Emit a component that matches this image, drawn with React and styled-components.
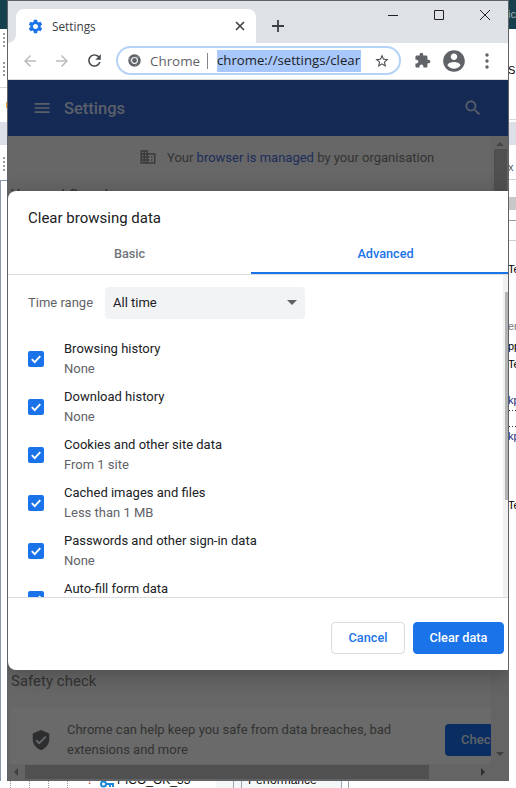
import React from 'react';
import styled, { createGlobalStyle } from 'styled-components';

const Global = createGlobalStyle`
  html, body { margin: 0; padding: 0; background: #fff; overflow: hidden; }
  * { box-sizing: border-box; }
`;

const P = {
  gear: 'M19.14 12.94c.04-.3.06-.61.06-.94 0-.32-.02-.64-.07-.94l2.03-1.58c.18-.14.23-.41.12-.61l-1.92-3.32c-.12-.22-.37-.29-.59-.22l-2.39.96c-.5-.38-1.03-.7-1.62-.94l-.36-2.54c-.04-.24-.24-.41-.48-.41h-3.84c-.24 0-.43.17-.47.41l-.36 2.54c-.59.24-1.13.57-1.62.94l-2.39-.96c-.22-.08-.47 0-.59.22L2.74 8.87c-.12.21-.08.47.12.61l2.03 1.58c-.05.3-.09.63-.09.94s.02.64.07.94l-2.03 1.58c-.18.14-.23.41-.12.61l1.92 3.32c.12.22.37.29.59.22l2.39-.96c.5.38 1.03.7 1.62.94l.36 2.54c.05.24.24.41.48.41h3.84c.24 0 .44-.17.47-.41l.36-2.54c.59-.24 1.13-.56 1.62-.94l2.39.96c.22.08.47 0 .59-.22l1.92-3.32c.12-.22.07-.47-.12-.61l-2.01-1.58zM12 15.6c-1.98 0-3.6-1.62-3.6-3.6s1.62-3.6 3.6-3.6 3.6 1.62 3.6 3.6-1.62 3.6-3.6 3.6z',
  back: 'M20 11H7.83l5.59-5.59L12 4l-8 8 8 8 1.41-1.41L7.83 13H20v-2z',
  forward: 'M12 4l-1.41 1.41L16.17 11H4v2h12.17l-5.58 5.59L12 20l8-8z',
  reload: 'M17.65 6.35C16.2 4.9 14.21 4 12 4c-4.42 0-7.99 3.58-7.99 8s3.57 8 7.99 8c3.73 0 6.84-2.55 7.73-6h-2.08c-.82 2.33-3.04 4-5.65 4-3.31 0-6-2.69-6-6s2.69-6 6-6c1.66 0 3.14.69 4.22 1.78L13 11h7V4l-2.35 2.35z',
  star: 'M22 9.24l-7.19-.62L12 2 9.19 8.63 2 9.24l5.46 4.73L5.82 21 12 17.27 18.18 21l-1.63-7.03L22 9.24zM12 15.4l-3.76 2.27 1-4.28-3.32-2.88 4.38-.38L12 6.1l1.71 4.04 4.38.38-3.32 2.88 1 4.28L12 15.4z',
  puzzle: 'M20.5 11H19V7c0-1.1-.9-2-2-2h-4V3.5C13 2.12 11.88 1 10.5 1S8 2.12 8 3.5V5H4c-1.1 0-1.99.9-1.99 2v3.8H3.5c1.49 0 2.7 1.21 2.7 2.7s-1.21 2.7-2.7 2.7H2V20c0 1.1.9 2 2 2h3.8v-1.5c0-1.49 1.21-2.7 2.7-2.7 1.49 0 2.7 1.21 2.7 2.7V22H17c1.1 0 2-.9 2-2v-4h1.5c1.38 0 2.5-1.12 2.5-2.5S21.88 11 20.5 11z',
  avatar: 'M12 2C6.48 2 2 6.48 2 12s4.48 10 10 10 10-4.48 10-10S17.52 2 12 2zm0 3c1.66 0 3 1.34 3 3s-1.34 3-3 3-3-1.34-3-3 1.34-3 3-3zm0 14.2c-2.5 0-4.71-1.28-6-3.22.03-1.99 4-3.08 6-3.08 1.99 0 5.97 1.09 6 3.08-1.29 1.94-3.5 3.22-6 3.22z',
  menu: 'M3 18h18v-2H3v2zm0-5h18v-2H3v2zm0-7v2h18V6H3z',
  search: 'M15.5 14h-.79l-.28-.27C15.41 12.59 16 11.11 16 9.5 16 5.91 13.09 3 9.5 3S3 5.91 3 9.5 5.91 16 9.5 16c1.61 0 3.09-.59 4.23-1.57l.27.28v.79l5 4.99L20.49 19l-4.99-5zm-6 0C7.01 14 5 11.99 5 9.5S7.01 5 9.5 5 14 7.01 14 9.5 11.99 14 9.5 14z',
  domain: 'M12 7V3H2v18h20V7H12zM6 19H4v-2h2v2zm0-4H4v-2h2v2zm0-4H4V9h2v2zm0-4H4V5h2v2zm4 12H8v-2h2v2zm0-4H8v-2h2v2zm0-4H8V9h2v2zm0-4H8V5h2v2zm10 12h-8v-2h2v-2h-2v-2h2v-2h-2V9h8v10zm-2-8h-2v2h2v-2zm0 4h-2v2h2v-2z',
  shield: 'M12 1L3 5v6c0 5.55 3.84 10.74 9 12 5.16-1.26 9-6.45 9-12V5l-9-4zm-2 16l-4-4 1.41-1.41L10 14.17l6.59-6.59L18 9l-8 8z',
};

const Glyph = ({ d, size = 24, color = '#5f6368' }) => (
  <svg width={size} height={size} viewBox="0 0 24 24" style={{ display: 'block', flex: 'none' }}>
    <path d={d} fill={color} />
  </svg>
);

const Line = ({ d, w = 10, color = '#202124', sw = 1 }) => (
  <svg width={w} height={w} viewBox={`0 0 ${w} ${w}`} style={{ display: 'block', flex: 'none' }}>
    <path d={d} fill="none" stroke={color} strokeWidth={sw} />
  </svg>
);

const ChromeMark = () => (
  <svg width="13" height="13" viewBox="0 0 24 24" style={{ display: 'block', flex: 'none' }}>
    <circle cx="12" cy="12" r="11.5" fill="#5f6368" />
    <circle cx="12" cy="12" r="6.4" fill="#fff" />
    <circle cx="12" cy="12" r="4.4" fill="#5f6368" />
    <path d="M12 5.6h10M6.5 15.2L1.6 6.6M17.5 15.2l-5 8.6" stroke="#9aa0a6" strokeWidth="1.4" />
  </svg>
);

const Desktop = styled.div`
  width: 516px;
  height: 788px;
  display: grid;
  grid-template-columns: 7px 502px 7px;
  grid-template-rows: 781px 7px;
  overflow: hidden;
  background: #fff;
  font-family: Roboto, "Liberation Sans", sans-serif;
`;

const Strip = styled.div`
  display: flex;
  flex-direction: column;
  overflow: hidden;
  background: #fff;
`;

const Band = styled.div`
  height: ${p => p.$h}px;
  flex: none;
  background: ${p => p.$bg || 'transparent'};
  border-bottom: ${p => (p.$line ? `1px solid ${p.$line}` : '0')};
  color: ${p => p.$color || '#000'};
  font: 11px/${p => p.$h}px "Liberation Sans", sans-serif;
  text-indent: -1px;
  white-space: nowrap;
  overflow: hidden;
`;

const Grip = styled.div`
  height: ${p => p.$h}px;
  flex: none;
  margin-left: 3px;
  width: 2px;
  margin-top: ${p => p.$top}px;
  background: repeating-linear-gradient(#9a9a9a 0 2px, transparent 2px 4px);
`;

const Orange = styled.div`
  height: 6px;
  width: 1px;
  margin: 14px 0 0 6px;
  background: #f2a33c;
`;

const Blob = styled.div`
  height: 13px;
  width: 7px;
  margin-top: 17px;
  background: #c8c8c8;
`;

const Rail = styled.div`
  flex: 1;
  border-left: 1px solid #8b99ad;
`;

const Dots = styled.div`
  height: 1px;
  flex: none;
  margin-top: ${p => p.$top}px;
  background: repeating-linear-gradient(90deg, #333 0 1px, transparent 1px 3px);
`;

const Footer = styled.div`
  grid-column: 1 / 4;
  overflow: hidden;
  display: grid;
  grid-template-columns: 10px 19px 19px 19px 21px 12px 17px 99px 17px 1px 7px 1px 99px 1px 6px 1fr;
  background: #fff;
`;

const Cell = styled.div`
  border-left: ${p => (p.$dot ? '1px dotted #999' : p.$solid ? '1px solid #9aa5b5' : '0')};
  background: ${p => p.$bg || 'transparent'};
  color: ${p => p.$color || '#000'};
  font: ${p => p.$weight || 400} 12px/1 Roboto, sans-serif;
  white-space: nowrap;
  overflow: hidden;
`;

const ClipText = styled.div`
  margin-top: -7px;
  font: 12px/12px "Liberation Sans", sans-serif;
  color: ${p => p.$color || '#111'};
  padding-left: ${p => p.$pl || 0}px;
`;

const Window = styled.div`
  display: flex;
  flex-direction: column;
  border: 1px solid #5f6266;
  background: #fff;
  overflow: hidden;
  width: 502px;
`;

const TabStrip = styled.div`
  height: 42px;
  flex: none;
  background: #dee1e6;
  display: flex;
  align-items: flex-end;
  padding-left: 8px;
`;

const Tab = styled.div`
  position: relative;
  width: 240px;
  height: 34px;
  background: #fff;
  border-radius: 8px 8px 0 0;
  display: flex;
  align-items: center;
  padding: 0 11px;
  gap: 8px;
  font: 11.8px "Open Sans", sans-serif;
  color: #3c4043;
  &::before {
    content: '';
    position: absolute;
    left: -8px;
    bottom: 0;
    width: 8px;
    height: 8px;
    background: radial-gradient(circle at 0 0, transparent 7.5px, #fff 8px);
  }
`;

const TabTitle = styled.span`
  flex: 1;
`;

const NewTab = styled.div`
  margin-left: 16px;
  height: 34px;
  display: flex;
  align-items: center;
`;

const WinControls = styled.div`
  margin-left: auto;
  align-self: flex-start;
  height: 30px;
  display: flex;
  align-items: center;
  padding-right: 18px;
  gap: 36px;
  margin-top: -1px;
`;

const Toolbar = styled.div`
  height: 37px;
  flex: none;
  background: #fff;
  border-bottom: 1px solid #dadce0;
  display: flex;
  align-items: center;
  padding-bottom: 1px;
`;

const NavButton = styled.div`
  width: ${p => p.$w}px;
  flex: none;
  display: flex;
  justify-content: center;
`;

const Omnibox = styled.div`
  width: 285px;
  height: 29px;
  flex: none;
  border: 2px solid #b5d2f7;
  border-radius: 15px;
  background: #fff;
  display: flex;
  align-items: center;
  padding-left: 10px;
  font: 14px "Open Sans", sans-serif;
  color: #5f6368;
  overflow: hidden;
`;

const Scheme = styled.span`
  margin-left: 9px;
  font-size: 13.4px;
  width: 57px;
  flex: none;
`;

const Sep = styled.span`
  width: 1px;
  height: 16px;
  background: #80868b;
  flex: none;
`;

const Selected = styled.span`
  margin-left: 9px;
  background: #a8c7fa;
  color: #202124;
  width: 144px;
  flex: none;
  height: 22px;
  line-height: 21px;
  font-size: 13.2px;
  white-space: nowrap;
  overflow: hidden;
`;

const Star = styled.div`
  margin-left: 13px;
`;

const Stage = styled.div`
  position: relative;
  flex: 1;
  min-height: 0;
  display: flex;
  flex-direction: column;
  overflow: hidden;
  background: #666766;
`;

const Header = styled.div`
  height: 56px;
  flex: none;
  background: #152955;
  display: flex;
  align-items: center;
  padding: 0 25px 0 24px;
  color: #5a6069;
  font: 500 16.5px Roboto, sans-serif;
  gap: 12px;
`;

const HeaderTitle = styled.span`
  flex: 1;
`;

const Viewport = styled.div`
  flex: 1;
  min-height: 0;
  display: flex;
`;

const PageBody = styled.div`
  width: 483px;
  flex: none;
  overflow: hidden;
  padding-left: 3px;
  color: #333;
`;

const Managed = styled.div`
  height: 42px;
  display: flex;
  align-items: center;
  padding-left: 128px;
  gap: 10px;
  font: 13px Roboto, sans-serif;
  color: #333;
  margin-bottom: 6px;
`;

const ManagedLink = styled.span`
  color: #1c2c5c;
`;

const SectionTitle = styled.div`
  font: 400 14.8px/22px Roboto, sans-serif;
  color: #333;
  letter-spacing: 0.1px;
  height: ${p => p.$h}px;
  white-space: nowrap;
`;

const SafetyCard = styled.div`
  height: 60px;
  width: 500px;
  background: #696a69;
  border-radius: 4px 4px 0 0;
  display: flex;
  align-items: flex-start;
  padding: 12px 0 0 19px;
  gap: 15px;
`;

const ShieldWrap = styled.div`
  margin-top: 9px;
  flex: none;
`;

const CardText = styled.div`
  width: 350px;
  flex: none;
  font: 13px/20px Roboto, sans-serif;
  color: #333;
`;

const CheckBtn = styled.div`
  width: 80px;
  height: 32px;
  margin: 4px 0 0 13px;
  flex: none;
  border-radius: 4px;
  background: #0b2e62;
  color: #5f6368;
  font: 500 13px/32px Roboto, sans-serif;
  padding-left: 16px;
`;

const VBar = styled.div`
  width: 17px;
  flex: none;
  background: #636463;
  display: flex;
  flex-direction: column;
  align-items: center;
  padding-left: 1px;
`;

const VThumb = styled.div`
  width: 13px;
  height: 160px;
  flex: none;
  margin-top: 3px;
  background: #4f504f;
`;

const ArrowUp = styled.div`
  margin-top: 6px;
  width: 0;
  height: 0;
  flex: none;
  border: 4px solid transparent;
  border-top: 0;
  border-bottom: 4px solid #454545;
`;

const ArrowDown = styled.div`
  margin-top: auto;
  margin-bottom: 8px;
  width: 0;
  height: 0;
  border: 4px solid transparent;
  border-bottom: 0;
  border-top: 4px solid #3f3f3f;
`;

const HBar = styled.div`
  height: 16px;
  flex: none;
  background: #636463;
  display: flex;
  align-items: center;
`;

const ArrowLeft = styled.div`
  margin-left: 6px;
  width: 0;
  height: 0;
  flex: none;
  border: 4px solid transparent;
  border-left: 0;
  border-right: 4px solid #3f3f3f;
`;

const HThumb = styled.div`
  margin-left: 7px;
  width: 404px;
  height: 14px;
  flex: none;
  background: #4f504f;
`;

const ArrowRight = styled.div`
  margin-left: 52px;
  width: 0;
  height: 0;
  flex: none;
  border: 4px solid transparent;
  border-right: 0;
  border-left: 4px solid #2f2f2f;
`;

const Dialog = styled.div`
  position: absolute;
  left: 0;
  top: 111px;
  width: 500px;
  height: 479px;
  background: #fff;
  border-radius: 8px 0 0 8px;
  box-shadow: 0 4px 22px rgba(0, 0, 0, 0.28);
  display: flex;
  flex-direction: column;
`;

const DialogTitle = styled.div`
  height: 50px;
  flex: none;
  padding: 17px 0 0 20px;
  font: 400 15px/20px Roboto, sans-serif;
  color: #202124;
`;

const Tabs = styled.div`
  height: 34px;
  flex: none;
  display: grid;
  grid-template-columns: 243px 257px;
  border-bottom: 1px solid #dadce0;
`;

const TabBtn = styled.div`
  text-align: center;
  font: 500 12.7px/26px Roboto, sans-serif;
  color: ${p => (p.$on ? '#1a73e8' : '#70757a')};
  border-bottom: ${p => (p.$on ? '2px solid #1a73e8' : '0')};
  padding-left: ${p => (p.$on ? 12 : 0)}px;
  height: ${p => (p.$on ? 33 : 32)}px;
`;

const ScrollArea = styled.div`
  flex: 1;
  min-height: 0;
  display: flex;
  overflow: hidden;
  border-bottom: 1px solid #dadce0;
`;

const List = styled.div`
  flex: 1;
  padding: 12px 0 0 20px;
`;

const TimeRow = styled.div`
  display: flex;
  align-items: center;
  height: 32px;
  margin-bottom: 16px;
  font: 13px Roboto, sans-serif;
  color: #5f6368;
`;

const TimeLabel = styled.span`
  width: 77px;
  flex: none;
  margin-top: -2px;
`;

const Select = styled.div`
  width: 200px;
  height: 32px;
  border-radius: 4px;
  background: #f1f3f4;
  color: #202124;
  display: flex;
  align-items: center;
  justify-content: space-between;
  padding: 0 8px 2px 8px;
`;

const Caret = styled.span`
  width: 0;
  height: 0;
  border-left: 5.5px solid transparent;
  border-right: 5.5px solid transparent;
  border-top: 5.5px solid #5f6368;
`;

const Row = styled.div`
  height: 48px;
  flex: none;
  display: flex;
  align-items: center;
  gap: 20px;
`;

const Box = styled.div`
  width: 16px;
  height: 16px;
  border-radius: 2px;
  background: #1a73e8;
  flex: none;
  display: flex;
  align-items: center;
  justify-content: center;
`;

const RowText = styled.div`
  font: 13px/20px Roboto, sans-serif;
  color: #202124;
`;

const RowSub = styled.div`
  color: #5f6368;
`;

const Track = styled.div`
  width: 5px;
  flex: none;
  background: #f1f1f1;
  padding: 17px 0 0 2px;
`;

const Thumb = styled.div`
  width: 3px;
  height: 208px;
  background: #b4b4b4;
`;

const Actions = styled.div`
  height: 72px;
  flex: none;
  display: flex;
  justify-content: flex-end;
  align-items: flex-start;
  gap: 8px;
  padding: 24px 4px 0 0;
`;

const Button = styled.div`
  height: 32px;
  width: ${p => p.$w}px;
  border-radius: 4px;
  text-align: center;
  font: 500 12.7px/30px Roboto, sans-serif;
  border: 1px solid ${p => (p.$primary ? '#1a73e8' : '#dadce0')};
  background: ${p => (p.$primary ? '#1a73e8' : '#fff')};
  color: ${p => (p.$primary ? '#fff' : '#1a73e8')};
`;

const rows = [
  ['Browsing history', 'None'],
  ['Download history', 'None'],
  ['Cookies and other site data', 'From 1 site'],
  ['Cached images and files', 'Less than 1 MB'],
  ['Passwords and other sign-in data', 'None'],
  ['Auto-fill form data', 'None'],
];

export default function App() {
  return (
    <Desktop>
      <Global />
      <Strip>
        <Band $h={29} $bg="#17404f" />
        <Grip $top={4} $h={14} />
        <Grip $top={15} $h={15} />
        <Band $h={11} $line="#d8d8d8" />
        <Band $h={34}><Orange /></Band>
        <Band $h={23} $bg="#dcdfe8" />
        <Grip $top={12} $h={15} />
        <Band $h={9} $line="#8b99ad" />
        <Rail />
      </Strip>

      <Window>
        <TabStrip>
          <Tab>
            <Glyph d={P.gear} size={17} color="#1a73e8" />
            <TabTitle>Settings</TabTitle>
            <Line d="M1 1l8 8M9 1l-8 8" color="#3c4043" sw={1.6} />
          </Tab>
          <NewTab>
            <Line w={12} d="M6 0v12M0 6h12" color="#3c4043" sw={1.8} />
          </NewTab>
          <WinControls>
            <Line d="M0 5.5h10" />
            <Line d="M.5.5h9v9h-9z" />
            <Line d="M0 0l10 10M10 0L0 10" />
          </WinControls>
        </TabStrip>

        <Toolbar>
          <NavButton $w={44}><Glyph d={P.back} size={18} color="#babcbe" /></NavButton>
          <NavButton $w={20}><Glyph d={P.forward} size={18} color="#babcbe" /></NavButton>
          <NavButton $w={44}><Glyph d={P.reload} size={19} color="#4a4d51" /></NavButton>
          <Omnibox>
            <ChromeMark />
            <Scheme>Chrome</Scheme>
            <Sep />
            <Selected>chrome://settings/clear</Selected>
            <Star><Glyph d={P.star} size={16} color="#4a4d51" /></Star>
          </Omnibox>
          <NavButton $w={42}><Glyph d={P.puzzle} size={17} color="#5f6368" /></NavButton>
          <NavButton $w={22}><Glyph d={P.avatar} size={26} color="#5f6368" /></NavButton>
          <NavButton $w={44}>
            <svg width="4" height="16" viewBox="0 0 4 16" style={{ display: 'block' }}>
              <circle cx="2" cy="2" r="1.7" fill="#5f6368" />
              <circle cx="2" cy="8" r="1.7" fill="#5f6368" />
              <circle cx="2" cy="14" r="1.7" fill="#5f6368" />
            </svg>
          </NavButton>
        </Toolbar>

        <Stage>
          <Header>
            <Glyph d={P.menu} size={20} color="#5a6069" />
            <HeaderTitle>Settings</HeaderTitle>
            <Glyph d={P.search} size={20} color="#5a6069" />
          </Header>
          <Viewport>
            <PageBody>
              <Managed>
                <Glyph d={P.domain} size={18} color="#3a3a3a" />
                <span>Your <ManagedLink>browser is managed</ManagedLink> by your organisation</span>
              </Managed>
              <SectionTitle $h={486}>You and Google</SectionTitle>
              <SectionTitle $h={38}>Safety check</SectionTitle>
              <SafetyCard>
                <ShieldWrap><Glyph d={P.shield} size={22} color="#2d2e2f" /></ShieldWrap>
                <CardText>
                  Chrome can help keep you safe from data breaches, bad extensions and more
                </CardText>
                <CheckBtn>Check now</CheckBtn>
              </SafetyCard>
            </PageBody>
            <VBar>
              <ArrowUp />
              <VThumb />
              <ArrowDown />
            </VBar>
          </Viewport>
          <HBar>
            <ArrowLeft />
            <HThumb />
            <ArrowRight />
          </HBar>

          <Dialog>
            <DialogTitle>Clear browsing data</DialogTitle>
            <Tabs>
              <TabBtn>Basic</TabBtn>
              <TabBtn $on>Advanced</TabBtn>
            </Tabs>
            <ScrollArea>
              <List>
                <TimeRow>
                  <TimeLabel>Time range</TimeLabel>
                  <Select>All time<Caret /></Select>
                </TimeRow>
                {rows.map(([title, sub]) => (
                  <Row key={title}>
                    <Box>
                      <svg width="12" height="12" viewBox="0 0 12 12" style={{ display: 'block' }}>
                        <path d="M1.8 6.2l2.9 2.9 5.6-6" fill="none" stroke="#fff" strokeWidth="1.9" />
                      </svg>
                    </Box>
                    <RowText>
                      {title}
                      <RowSub>{sub}</RowSub>
                    </RowText>
                  </Row>
                ))}
              </List>
              <Track><Thumb /></Track>
            </ScrollArea>
            <Actions>
              <Button $w={74}>Cancel</Button>
              <Button $w={91} $primary>Clear data</Button>
            </Actions>
          </Dialog>
        </Stage>
      </Window>

      <Strip>
        <Band $h={29} $bg="#17404f" $color="#9fb4bd">ic</Band>
        <Band $h={32} />
        <Band $h={18}>S</Band>
        <Band $h={41} $line="#d8d8d8" />
        <Band $h={2} />
        <Band $h={23} $bg="#dcdfe8" />
        <Band $h={13} />
        <Band $h={18} $color="#555">x</Band>
        <Band $h={4} $line="#d0d0d0" />
        <Band $h={41} $line="#9a9a9a"><Blob /></Band>
        <Band $h={20} $line="#cfcfcf" />
        <Band $h={19} />
        <Band $h={18}>Te</Band>
        <Band $h={39} />
        <Band $h={18} $color="#777">er</Band>
        <Band $h={2} />
        <Band $h={18}>pp</Band>
        <Band $h={18}>Te</Band>
        <Band $h={18} />
        <Band $h={18} $color="#1a2a7a">kp</Band>
        <Dots $top={1} />
        <Dots $top={15} />
        <Band $h={18} $color="#1a2a7a">kp</Band>
        <Band $h={51} />
        <Band $h={18}>Te</Band>
      </Strip>

      <Footer>
        <Cell />
        <Cell $dot />
        <Cell $dot />
        <Cell $dot />
        <Cell $dot />
        <Cell><ClipText $color="#d01010">!</ClipText></Cell>
        <Cell>
          <svg width="15" height="8" viewBox="0 0 15 8" style={{ display: 'block' }}>
            <circle cx="3.5" cy="3" r="2.5" fill="none" stroke="#1a8ad8" strokeWidth="2" />
            <path d="M6 3h8M10 3v3M13 3v3" stroke="#1a8ad8" strokeWidth="2" />
          </svg>
        </Cell>
        <Cell><ClipText>PICO_OK_33</ClipText></Cell>
        <Cell $bg="#f5f6f8" />
        <Cell $solid $bg="#f5f6f8" />
        <Cell $bg="#f5f6f8" />
        <Cell $solid $bg="#f5f6f8" />
        <Cell $bg="#f5f6f8"><ClipText $pl={6}>Performance</ClipText></Cell>
        <Cell $solid />
        <Cell />
        <Cell $solid />
      </Footer>
    </Desktop>
  );
}
